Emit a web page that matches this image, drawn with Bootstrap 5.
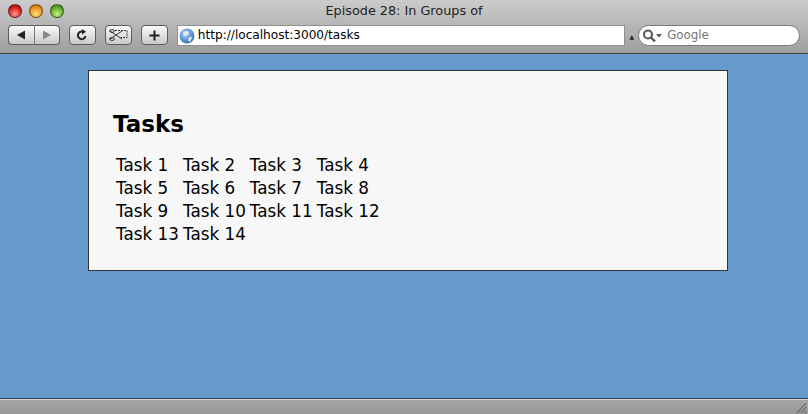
<!DOCTYPE html>
<html lang="en">
<head>
    <meta charset="UTF-8">
    <meta name="viewport" content="width=device-width, initial-scale=1.0">
    <title>Episode 28: In Groups of</title>
    <link rel="stylesheet" href="https://cdn.jsdelivr.net/npm/bootstrap@5.3.0/dist/css/bootstrap.min.css">
    <style>
        html, body { height: 414px; overflow: hidden; }
        body { font-family: "DejaVu Sans", Verdana, sans-serif; background: #6699cc; color: #000; }
        .safari-top { height: 54px; background: linear-gradient(#cbcbcb, #9f9f9f); border-bottom: 1px solid #3c3c3c; flex: none; }
        .title-row { height: 23px; position: relative; }
        .lights { position: absolute; left: 8px; top: 4px; }
        .light { width: 14px; height: 14px; border-radius: 50%; border: 1px solid rgba(0,0,0,.45); margin-right: 7px; }
        .light-red { background: radial-gradient(circle at 50% 75%, #ff9a90, #d7201d 60%, #8d1010); }
        .light-yellow { background: radial-gradient(circle at 50% 75%, #ffdf80, #e8901c 60%, #a35f0c); }
        .light-green { background: radial-gradient(circle at 50% 75%, #c8f080, #62aa2c 60%, #3c7418); }
        .win-title { font-size: 12.8px; line-height: 22px; text-align: center; color: #222; }
        .tool-row { height: 22px; padding: 2px 8px 0; }
        .tool-btn { height: 20px; width: 27px; border: 1px solid #5c5c5c; border-radius: 4px; background: linear-gradient(#fbfbfb, #c9c9c9); margin-right: 9px; }
        .tool-btn-half { width: 26px; margin: 0; border-radius: 4px 0 0 4px; border-right-width: 0; }
        .tool-btn-half + .tool-btn-half { border-radius: 0 4px 4px 0; border-right-width: 1px; border-left: 1px solid #777; margin-right: 9px; }
        .url-box { width: 449px; height: 21px; background: #fff; border: 1px solid #8f8f8f; font-size: 12.1px; line-height: 19px; color: #000; padding-left: 1px; }
        .url-text { margin-left: 3px; }
        .drop-mark { width: 13px; font-size: 6px; line-height: 21px; padding-top: 1px; text-align: center; color: #222; }
        .search-box { width: 162px; height: 21px; background: #fff; border: 1px solid #7b7b7b; border-radius: 11px; font-size: 11.8px; color: #757575; padding-left: 3px; }
        .search-label { margin-left: 4px; padding-top: 1px; }
        .page-area { flex: 1 1 auto; padding-top: 16px; }
        .tasks-panel { width: 640px; height: 201px; margin-left: 88px; background: #f7f7f7; border: 1px solid #333; padding: 39px 24px 0; }
        .tasks-panel h1 { font-family: "DejaVu Sans", Verdana, sans-serif; font-size: 23px; font-weight: 700; line-height: 28px; margin: 0 0 15px; }
        .tasks-grid { border-collapse: separate; border-spacing: 2px; font-size: 16.8px; line-height: 21px; }
        .tasks-grid td { padding: 0 1px; min-width: 63px; white-space: nowrap; }
        .status-strip { height: 16px; flex: none; background: linear-gradient(#a8a8a8, #979797); border-top: 1px solid #2f4259; box-shadow: inset 0 1px 0 #d5d5d5; position: relative; }
        .grip { position: absolute; right: 1px; bottom: 1px; }
    </style>
</head>
<body>
    <div class="d-flex flex-column vh-100">
        <div class="safari-top">
            <div class="title-row">
                <div class="lights d-flex">
                    <div class="light light-red"></div>
                    <div class="light light-yellow"></div>
                    <div class="light light-green"></div>
                </div>
                <div class="win-title">Episode 28: In Groups of</div>
            </div>
            <div class="tool-row d-flex align-items-start">
                <div class="tool-btn tool-btn-half d-flex align-items-center justify-content-center">
                    <svg width="10" height="10" viewBox="0 0 10 10"><path d="M1 5 9 0.5V9.5Z" fill="#222"/></svg>
                </div>
                <div class="tool-btn tool-btn-half d-flex align-items-center justify-content-center">
                    <svg width="10" height="10" viewBox="0 0 10 10"><path d="M9 5 1 0.5V9.5Z" fill="#8a8a8a"/></svg>
                </div>
                <div class="tool-btn d-flex align-items-center justify-content-center">
                    <svg width="12" height="12" viewBox="0 0 12 12"><path d="M9.5 7A3.8 3.8 0 1 1 6.5 2.6" fill="none" stroke="#222" stroke-width="2"/><path d="M6 0 10 2.8 6 5.4Z" fill="#222"/></svg>
                </div>
                <div class="tool-btn d-flex align-items-center justify-content-center">
                    <svg width="19" height="14" viewBox="0 0 19 14"><path d="M6 2.5H18V9.5H12" fill="none" stroke="#333" stroke-dasharray="2 1"/><path d="M1 3 13 11M1 11 13 3" stroke="#333" fill="none"/><ellipse cx="3" cy="3" rx="2.4" ry="1.4" fill="none" stroke="#333"/><ellipse cx="3" cy="11" rx="2.4" ry="1.4" fill="none" stroke="#333"/></svg>
                </div>
                <div class="tool-btn d-flex align-items-center justify-content-center">
                    <svg width="11" height="11" viewBox="0 0 11 11"><path d="M5.5 .5V10.5M.5 5.5H10.5" stroke="#222" stroke-width="2"/></svg>
                </div>
                <div class="url-box d-flex align-items-center">
                    <svg width="16" height="16" viewBox="0 0 15 15"><defs><radialGradient id="globe" cx=".4" cy=".35" r=".8"><stop offset="0" stop-color="#a9d0f5"/><stop offset="1" stop-color="#1c5fb4"/></radialGradient></defs><circle cx="7.5" cy="7.5" r="7" fill="url(#globe)"/><path d="M4 3.5 8 2.5 9.5 5 6.5 8 4 7ZM9 9 12.5 8.5 10.5 13 8.5 12Z" fill="#dfe9ef"/></svg>
                    <span class="url-text">http://localhost:3000/tasks</span>
                </div>
                <div class="drop-mark">&#9650;</div>
                <div class="search-box d-flex align-items-center">
                    <svg width="21" height="14" viewBox="0 0 21 14"><circle cx="6" cy="5.5" r="4" fill="none" stroke="#555" stroke-width="2"/><path d="M9 8.5 13 12.5" stroke="#555" stroke-width="2.4"/><path d="M14 5H20L17 8.5Z" fill="#555"/></svg>
                    <span class="search-label">Google</span>
                </div>
            </div>
        </div>

        <div class="page-area">
            <div class="tasks-panel">
                <h1>Tasks</h1>
                <table class="tasks-grid">
                    <tr><td>Task 1</td><td>Task 2</td><td>Task 3</td><td>Task 4</td></tr>
                    <tr><td>Task 5</td><td>Task 6</td><td>Task 7</td><td>Task 8</td></tr>
                    <tr><td>Task 9</td><td>Task 10</td><td>Task 11</td><td>Task 12</td></tr>
                    <tr><td>Task 13</td><td>Task 14</td><td></td><td></td></tr>
                </table>
            </div>
        </div>

        <div class="status-strip">
            <svg class="grip" width="11" height="11" viewBox="0 0 11 11"><path d="M1 11 10 1M5 11 10 5M8 11 10 9" stroke="#555" fill="none"/></svg>
        </div>
    </div>
    <script src="https://cdn.jsdelivr.net/npm/bootstrap@5.3.0/dist/js/bootstrap.bundle.min.js"></script>
</body>
</html>
